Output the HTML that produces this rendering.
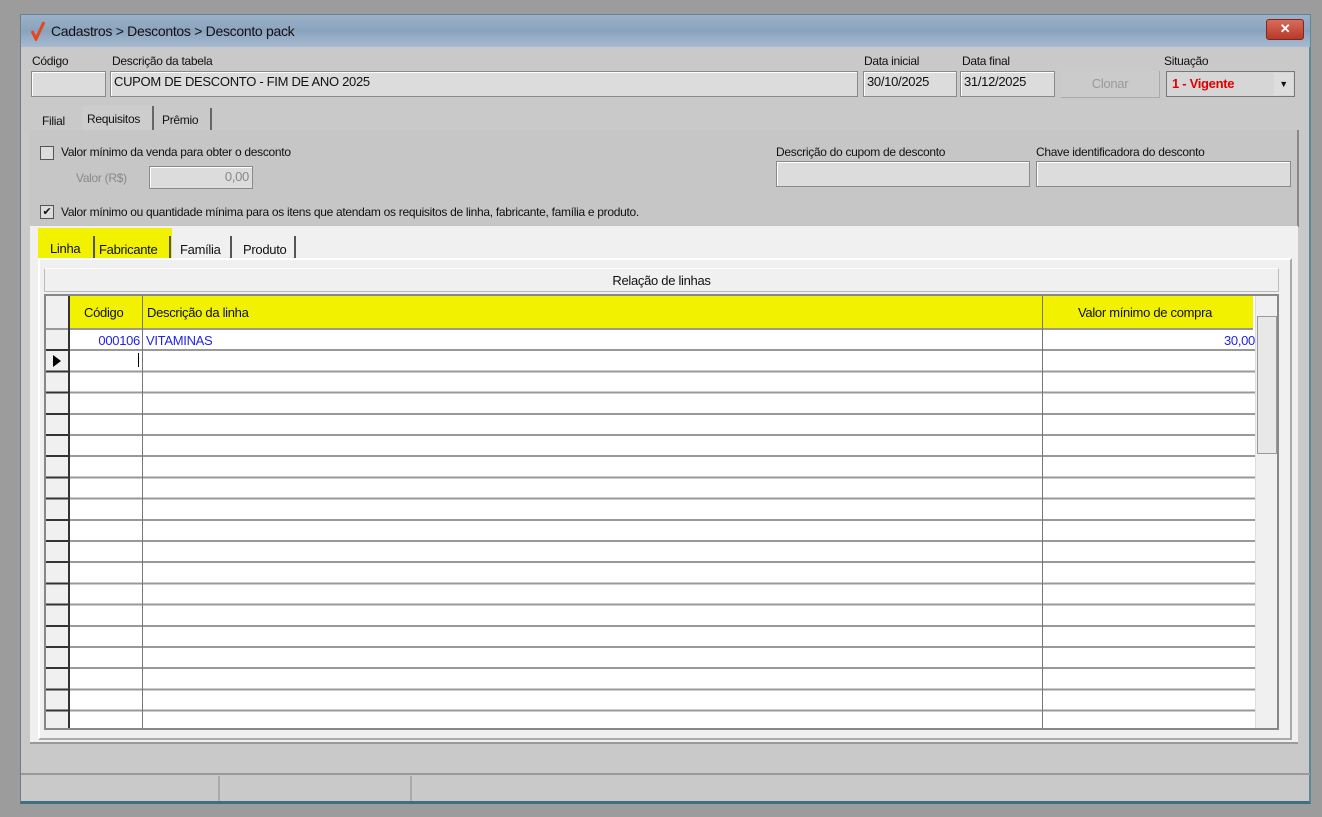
<!DOCTYPE html>
<html><head><meta charset="utf-8"><style>
*{box-sizing:border-box;margin:0;padding:0}
body{width:1322px;height:817px;background:#9c9c9c;position:relative;overflow:hidden;font-family:"Liberation Sans",sans-serif;font-size:12px;color:#111;letter-spacing:-0.3px}
.a{position:absolute}
.win{left:20px;top:14px;width:1291px;height:790px;background:#c9c9c9;border:1px solid #6b7f8f;border-bottom:3px solid #3d7080;border-right:2px solid #5a8a98}
.title{left:21px;top:15px;width:1289px;height:32px;background:linear-gradient(#9bb1c8,#8aa3bd 50%,#a7bbd0);}
.fld{background:#dcdcdc;border:1px solid #8a8a8a;box-shadow:inset 1px 1px 0 #fff;height:26px;padding:2px 3px;font-size:13px}
.lbl{font-size:12px}
.hl{background:#f2f200}
</style></head><body>
<div class="a win"></div>
<div class="a title"></div>
<svg class="a" style="left:30px;top:21px" width="16" height="20"><path d="M2 10 L6 18 L14 1" stroke="#e2471d" stroke-width="3" fill="none"/></svg>
<div class="a" style="left:51px;top:23px;font-size:14px;color:#111">Cadastros &gt; Descontos &gt; Desconto pack</div>
<div class="a" style="left:1266px;top:19px;width:38px;height:21px;background:linear-gradient(#d86b5a,#b8392a);border:1px solid #7a2a20;border-radius:3px;color:#fff;text-align:center;font-weight:bold;font-size:13px;line-height:18px">✕</div>

<div class="a lbl" style="left:32px;top:54px">Código</div>
<div class="a fld" style="left:31px;top:71px;width:75px"></div>
<div class="a lbl" style="left:112px;top:54px">Descrição da tabela</div>
<div class="a fld" style="left:110px;top:71px;width:748px">CUPOM DE DESCONTO - FIM DE ANO 2025</div>
<div class="a lbl" style="left:864px;top:54px">Data inicial</div>
<div class="a fld" style="left:863px;top:71px;width:94px">30/10/2025</div>
<div class="a lbl" style="left:962px;top:54px">Data final</div>
<div class="a fld" style="left:960px;top:71px;width:95px">31/12/2025</div>
<div class="a" style="left:1061px;top:71px;width:99px;height:27px;background:#cbcbcb;border-bottom:1px solid #aaa;border-right:1px solid #aaa;color:#9a9a9a;text-align:center;line-height:26px;font-size:13px">Clonar</div>
<div class="a lbl" style="left:1164px;top:54px">Situação</div>
<div class="a" style="left:1166px;top:71px;width:129px;height:26px;background:#d6d6d6;border:1px solid #777;color:#e00000;font-weight:bold;font-size:13px;padding:4px 5px">1 - Vigente</div>
<div class="a" style="left:1274px;top:73px;width:19px;height:22px;background:#ddd;font-size:9px;text-align:center;line-height:22px">▼</div>

<div class="a" style="left:42px;top:114px">Filial</div>
<div class="a" style="left:82px;top:106px;width:72px;height:24px;background:#cdcdcd;border-right:2px solid #666;padding:6px 5px">Requisitos</div>
<div class="a" style="left:158px;top:108px;width:54px;height:22px;border-right:2px solid #666;padding:5px 4px">Prêmio</div>
<div class="a" style="left:30px;top:130px;width:1269px;height:97px;background:#c6c6c6;border-right:2px solid #888"></div>
<div class="a" style="left:40px;top:146px;width:14px;height:14px;border:1px solid #555;background:#dcdcdc"></div>
<div class="a" style="left:61px;top:145px">Valor mínimo da venda para obter o desconto</div>
<div class="a" style="left:76px;top:171px;color:#888">Valor (R$)</div>
<div class="a fld" style="left:149px;top:166px;width:104px;height:23px;text-align:right;color:#888">0,00</div>
<div class="a" style="left:40px;top:205px;width:14px;height:14px;border:1px solid #555;background:#dcdcdc;font-size:11px;line-height:12px;text-align:center">✔</div>
<div class="a" style="left:61px;top:205px">Valor mínimo ou quantidade mínima para os itens que atendam os requisitos de linha, fabricante, família e produto.</div>
<div class="a" style="left:776px;top:145px">Descrição do cupom de desconto</div>
<div class="a fld" style="left:776px;top:161px;width:254px;height:26px"></div>
<div class="a" style="left:1036px;top:145px">Chave identificadora do desconto</div>
<div class="a fld" style="left:1036px;top:161px;width:255px;height:26px"></div>

<div class="a" style="left:30px;top:226px;width:1268px;height:518px;background:#f0f0f0;border-bottom:2px solid #999"></div>
<div class="a hl" style="left:38px;top:228px;width:134px;height:40px"></div>
<div class="a" style="left:50px;top:241px;font-size:13px">Linha</div>
<div class="a" style="left:93px;top:236px;height:26px;border-left:2px solid #555"></div>
<div class="a" style="left:99px;top:242px;font-size:13px">Fabricante</div>
<div class="a" style="left:169px;top:236px;height:26px;border-left:2px solid #555"></div>
<div class="a" style="left:180px;top:242px;font-size:13px">Família</div>
<div class="a" style="left:230px;top:236px;height:26px;border-left:2px solid #555"></div>
<div class="a" style="left:243px;top:242px;font-size:13px">Produto</div>
<div class="a" style="left:294px;top:236px;height:26px;border-left:2px solid #555"></div>
<div class="a" style="left:38px;top:258px;width:1254px;height:482px;border:2px solid #aaa;border-top-color:#fff;border-left-color:#fff;background:#f0f0f0"></div>
<div class="a" style="left:44px;top:268px;width:1235px;height:24px;background:#f0f0f0;border:1px solid #bbb;border-top-color:#fff;text-align:center;line-height:24px;font-size:13px">Relação de linhas</div>

<div class="a" style="left:44px;top:294px;width:1235px;height:436px;border:2px solid #888;background:#fff;overflow:hidden">
 <div class="a" style="left:0;top:0;width:24px;height:436px;background:#f0f0f0;border-right:2px solid #333"></div>
 <div class="a hl" style="left:24px;top:0;width:1183px;height:34px;border-bottom:2px solid #999"></div>
 <div class="a" style="left:0;width:1210px;height:400px;background:repeating-linear-gradient(#fff 0,#fff 19.2px,#999 19.2px,#999 21.2px);top:34px"></div>
 <div class="a" style="left:0;top:34px;width:24px;height:400px;background:repeating-linear-gradient(#f0f0f0 0,#f0f0f0 19.2px,#333 19.2px,#333 21.2px)"></div>
 <div class="a" style="left:0;top:32px;width:24px;height:2px;background:#999"></div>
 <div class="a" style="left:22px;top:0;width:2px;height:436px;background:#333"></div>
 <div class="a" style="left:96px;top:0;width:1px;height:436px;background:#777"></div>
 <div class="a" style="left:996px;top:0;width:1px;height:436px;background:#777"></div>
 <div class="a" style="left:38px;top:9px;font-size:13px">Código</div>
 <div class="a" style="left:101px;top:9px;font-size:13px">Descrição da linha</div>
 <div class="a" style="left:1032px;top:9px;font-size:13px">Valor mínimo de compra</div>
 <div class="a" style="left:24px;top:37px;width:70px;text-align:right;color:#2222ee;font-size:13px">000106</div>
 <div class="a" style="left:100px;top:37px;color:#2222ee;font-size:13px">VITAMINAS</div>
 <div class="a" style="left:1000px;top:37px;width:209px;text-align:right;color:#2222ee;font-size:13px">30,00</div>
 <div class="a" style="left:7px;top:59px;width:0;height:0;border-left:8px solid #000;border-top:6px solid transparent;border-bottom:6px solid transparent"></div>
 <div class="a" style="left:92px;top:57px;width:1px;height:14px;background:#000"></div>
 <div class="a" style="left:1209px;top:0;width:22px;height:436px;background:#f0f0f0;border-left:1px solid #ddd"></div>
 <div class="a" style="left:1211px;top:20px;width:20px;height:138px;background:#e8e8e8;border:1px solid #999"></div>
</div>

<div class="a" style="left:21px;top:773px;width:1289px;height:2px;background:#999"></div>
<div class="a" style="left:218px;top:776px;width:2px;height:25px;background:#aaa"></div>
<div class="a" style="left:410px;top:776px;width:2px;height:25px;background:#aaa"></div>
</body></html>
